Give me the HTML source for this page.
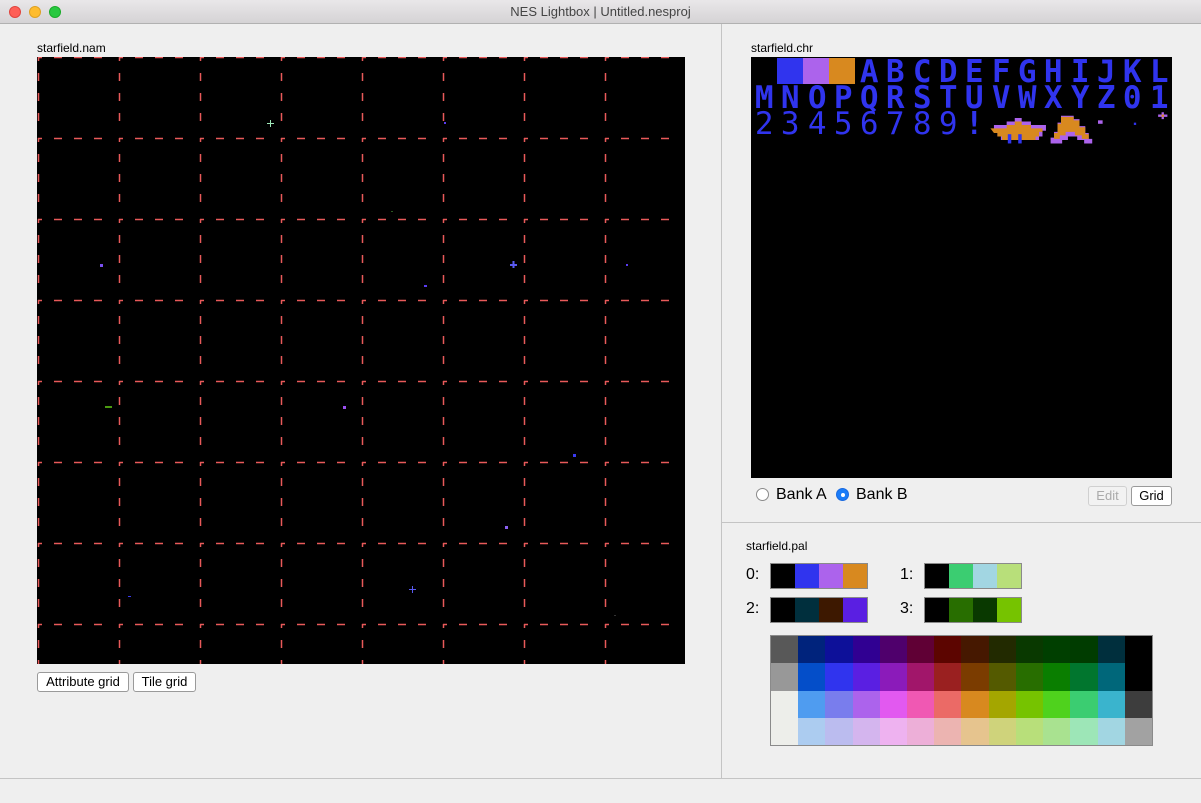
<!DOCTYPE html>
<html><head><meta charset="utf-8"><style>
*{margin:0;padding:0;box-sizing:border-box}
body{width:1201px;height:803px;background:#efefef;font-family:"Liberation Sans",sans-serif;position:relative;overflow:hidden;color:#000}
.abs{position:absolute}
#title{left:0;top:0;width:1201px;height:24px;background:linear-gradient(#e9e7e9,#d5d3d5);border-bottom:1px solid #b1b1b1;text-align:center;font-size:13px;line-height:24px;color:#444}
.dot{top:6px;width:12px;height:12px;border-radius:50%}
.lbl{font-size:12px}
.btn{background:#fff;border:1px solid #9a9a9a;border-radius:3px;font-size:13px;text-align:center;line-height:18px;height:20px}
.sw{height:26px;border:1px solid #8a8a8a;display:flex}
.sw div{flex:1}
.pl{font-size:16px}
.t{position:absolute;width:26.3px;height:26px;color:#3034ee;font-family:"DejaVu Sans Mono","Liberation Mono",monospace;font-size:31px;line-height:26px;text-align:center;font-weight:bold}
</style></head><body>
<div id="title" class="abs">NES Lightbox | Untitled.nesproj</div>
<div class="abs dot" style="left:9px;background:#fe5f57;border:1px solid #e0443e"></div>
<div class="abs dot" style="left:29px;background:#febc2e;border:1px solid #dea123"></div>
<div class="abs dot" style="left:49px;background:#28c840;border:1px solid #1aab29"></div>

<div class="abs" style="left:721px;top:24px;width:1px;height:755px;background:#c4c4c4"></div>
<div class="abs" style="left:722px;top:522px;width:479px;height:1px;background:#c4c4c4"></div>
<div class="abs" style="left:0;top:778px;width:1201px;height:1px;background:#c4c4c4"></div>

<div class="abs lbl" style="left:37px;top:41px">starfield.nam</div>
<svg class="abs" style="left:37px;top:57px" width="648" height="607" viewBox="37 57 648 607">
<rect x="37" y="57" width="648" height="607" fill="#000"/>
<g stroke="#e85a5a" stroke-width="1.5" stroke-dasharray="4 12 8 12 8 12 8 17" fill="none">
<path d="M38.5 57V664M119.5 57V664M200.5 57V664M281.5 57V664M362.5 57V664M443.5 57V664M524.5 57V664M605.5 57V664"/>
<path d="M38 57.5H685M38 138.5H685M38 219.5H685M38 300.5H685M38 381.5H685M38 462.5H685M38 543.5H685M38 624.5H685"/>
</g>
<g fill="#5a3cf0">
<path d="M267 123h7v1h-7zM270 120h1v7h-1z" fill="#9de6b7"/>
<rect x="444" y="122" width="2" height="2"/>
<rect x="391" y="211" width="2" height="1" fill="#2a5a20"/>
<rect x="100" y="264" width="3" height="3" fill="#7a50f0"/>
<path d="M510 264h7v2h-7zM512.5 261h2v7h-2z" fill="#5a5af0"/>
<rect x="626" y="264" width="2" height="2"/>
<rect x="424" y="285" width="3" height="2"/>
<rect x="105" y="406" width="7" height="2" fill="#4a9a10"/>
<rect x="343" y="406" width="3" height="3" fill="#9a50f0"/>
<rect x="573" y="454" width="3" height="3" fill="#3a3af0"/>
<rect x="505" y="526" width="3" height="3" fill="#8a60f0"/>
<rect x="128" y="596" width="3" height="1" fill="#3a3af0"/>
<path d="M409 589h7v1h-7zM412 586h1v7h-1z" fill="#5a5af0"/>
<rect x="614" y="615" width="2" height="1" fill="#333"/>
</g>
</svg>
<div class="abs btn" style="left:37px;top:672px;width:92px">Attribute grid</div>
<div class="abs btn" style="left:133px;top:672px;width:63px">Tile grid</div>

<div class="abs lbl" style="left:751px;top:41px">starfield.chr</div>
<div class="abs" style="left:751px;top:57px;width:421px;height:421px;background:#000;overflow:hidden">
<div class="abs" style="left:26px;top:1px;width:26px;height:26px;background:#3034ee"></div>
<div class="abs" style="left:52px;top:1px;width:26px;height:26px;background:#ac63ec"></div>
<div class="abs" style="left:78px;top:1px;width:26px;height:26px;background:#d8891f"></div>
<span class="t" style="left:105px;top:2px">A</span><span class="t" style="left:131px;top:2px">B</span><span class="t" style="left:158px;top:2px">C</span><span class="t" style="left:184px;top:2px">D</span><span class="t" style="left:210px;top:2px">E</span><span class="t" style="left:237px;top:2px">F</span><span class="t" style="left:263px;top:2px">G</span><span class="t" style="left:289px;top:2px">H</span><span class="t" style="left:316px;top:2px">I</span><span class="t" style="left:342px;top:2px">J</span><span class="t" style="left:368px;top:2px">K</span><span class="t" style="left:395px;top:2px">L</span>
<span class="t" style="left:0px;top:28px">M</span><span class="t" style="left:26px;top:28px">N</span><span class="t" style="left:53px;top:28px">O</span><span class="t" style="left:79px;top:28px">P</span><span class="t" style="left:105px;top:28px">Q</span><span class="t" style="left:131px;top:28px">R</span><span class="t" style="left:158px;top:28px">S</span><span class="t" style="left:184px;top:28px">T</span><span class="t" style="left:210px;top:28px">U</span><span class="t" style="left:237px;top:28px">V</span><span class="t" style="left:263px;top:28px">W</span><span class="t" style="left:289px;top:28px">X</span><span class="t" style="left:316px;top:28px">Y</span><span class="t" style="left:342px;top:28px">Z</span><span class="t" style="left:368px;top:28px">0</span><span class="t" style="left:395px;top:28px">1</span>
<span class="t" style="left:0px;top:54px;font-weight:normal">2</span><span class="t" style="left:26px;top:54px;font-weight:normal">3</span><span class="t" style="left:53px;top:54px;font-weight:normal">4</span><span class="t" style="left:79px;top:54px;font-weight:normal">5</span><span class="t" style="left:105px;top:54px;font-weight:normal">6</span><span class="t" style="left:131px;top:54px;font-weight:normal">7</span><span class="t" style="left:158px;top:54px;font-weight:normal">8</span><span class="t" style="left:184px;top:54px;font-weight:normal">9</span><span class="t" style="left:210px;top:54px">!</span>
<svg class="abs" style="left:236px;top:54px" width="185" height="36" viewBox="0 0 160 31">
<path d="M0 12h17v-3h7v-3h6v3h8v3h13v5h-3v5h-3v3h-33v-3h-3v-5h-3v-5h-3z" fill="#ac63ec"/>
<path d="M3 15h14v-3h7v-3h6v3h8v3h10v3h-3v4h-3v3h-29v-3h-4v-3h-3z" fill="#d8891f"/>
<rect x="18" y="20" width="3" height="8" fill="#3034ee"/><rect x="27" y="20" width="3" height="8" fill="#3034ee"/>
<path d="M55 28v-5h3v-5h3v-8h3v-6h11v3h5v6h5v6h3v5h3v4h-7v-3h-6v-3h-8v3h-5v3h-10z" fill="#ac63ec"/>
<path d="M58 24v-5h3v-8h3v-6h11v3h5v6h5v6h3v4h-6v-3h-6v-3h-8v3h-5v3z" fill="#d8891f"/>
<rect x="96" y="8" width="4" height="3" fill="#ac63ec"/>
<rect x="127" y="10" width="2" height="2" fill="#3034ee"/>
<path d="M151 1h2v6h-2zM148 3h8v2h-8z" fill="#ac63ec"/><rect x="151" y="3" width="2" height="2" fill="#d8891f"/>
</svg>
</div>
<div class="abs" style="left:756px;top:488px;width:13px;height:13px;border-radius:50%;background:#fff;border:1px solid #8a8a8a"></div>
<div class="abs" style="left:776px;top:486px;font-size:16px">Bank A</div>
<div class="abs" style="left:836px;top:488px;width:13px;height:13px;border-radius:50%;background:#1a7cf8;border:1px solid #1a6ae0"><div style="position:absolute;left:3.5px;top:3.5px;width:4px;height:4px;border-radius:50%;background:#fff"></div></div>
<div class="abs" style="left:856px;top:486px;font-size:16px">Bank B</div>
<div class="abs btn" style="left:1088px;top:486px;width:39px;color:#aaa;background:#f2f2f2;border-color:#d0d0d0">Edit</div>
<div class="abs btn" style="left:1131px;top:486px;width:41px">Grid</div>

<div class="abs lbl" style="left:746px;top:539px">starfield.pal</div>
<div class="abs pl" style="left:746px;top:566px">0:</div>
<div class="abs sw" style="left:770px;top:563px;width:98px"><div style="background:#000"></div><div style="background:#3034ee"></div><div style="background:#ac63ec"></div><div style="background:#d8891f"></div></div>
<div class="abs pl" style="left:900px;top:566px">1:</div>
<div class="abs sw" style="left:924px;top:563px;width:98px"><div style="background:#000"></div><div style="background:#3bcd71"></div><div style="background:#a2d6e2"></div><div style="background:#b8df7a"></div></div>
<div class="abs pl" style="left:746px;top:600px">2:</div>
<div class="abs sw" style="left:770px;top:597px;width:98px"><div style="background:#000"></div><div style="background:#002f3d"></div><div style="background:#3d1800"></div><div style="background:#5a1fe2"></div></div>
<div class="abs pl" style="left:900px;top:600px">3:</div>
<div class="abs sw" style="left:924px;top:597px;width:98px"><div style="background:#000"></div><div style="background:#286e00"></div><div style="background:#093900"></div><div style="background:#76c300"></div></div>

<div class="abs" style="left:770px;top:635px;width:383px;height:111px;border:1px solid #8a8a8a;display:grid;grid-template-columns:repeat(14,1fr);grid-template-rows:repeat(4,1fr)">
<div style="background:#585858"></div><div style="background:#00237c"></div><div style="background:#0d1099"></div><div style="background:#300092"></div><div style="background:#4f006c"></div><div style="background:#600035"></div><div style="background:#5c0500"></div><div style="background:#461800"></div><div style="background:#222a00"></div><div style="background:#093900"></div><div style="background:#003f00"></div><div style="background:#003c00"></div><div style="background:#002f3d"></div><div style="background:#000"></div>
<div style="background:#989898"></div><div style="background:#044ec9"></div><div style="background:#3034ee"></div><div style="background:#5a1fe2"></div><div style="background:#8b1bba"></div><div style="background:#a1166a"></div><div style="background:#9a2020"></div><div style="background:#7b3c00"></div><div style="background:#545a00"></div><div style="background:#286e00"></div><div style="background:#0a7e00"></div><div style="background:#01762e"></div><div style="background:#00677a"></div><div style="background:#000"></div>
<div style="background:#edeeea"></div><div style="background:#4f9cf0"></div><div style="background:#797ded"></div><div style="background:#ac63ec"></div><div style="background:#e259f0"></div><div style="background:#f058b3"></div><div style="background:#eb6a66"></div><div style="background:#d8891f"></div><div style="background:#a4a600"></div><div style="background:#76c300"></div><div style="background:#4fd21d"></div><div style="background:#3bcd71"></div><div style="background:#3ab4cd"></div><div style="background:#3d3d3d"></div>
<div style="background:#edeeea"></div><div style="background:#acccf0"></div><div style="background:#bbbcef"></div><div style="background:#d4b5ee"></div><div style="background:#eeb2f0"></div><div style="background:#edafd8"></div><div style="background:#ecb4b1"></div><div style="background:#e6c48e"></div><div style="background:#cfd37b"></div><div style="background:#b8df7a"></div><div style="background:#a9e290"></div><div style="background:#9de6b7"></div><div style="background:#a2d6e2"></div><div style="background:#a2a2a2"></div>
</div>
</body></html>
